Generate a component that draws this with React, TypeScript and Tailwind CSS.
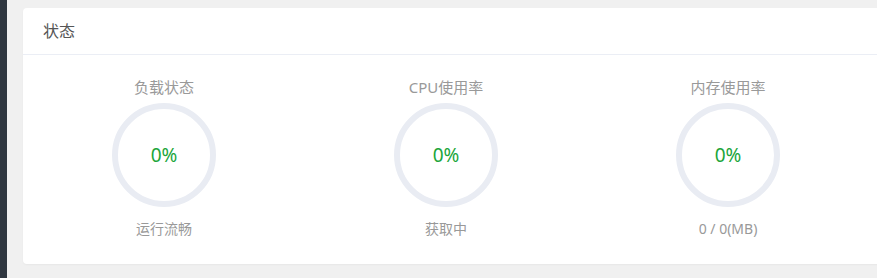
import React from "react";

const font = { fontFamily: '"Noto Sans", "Noto Sans CJK SC", sans-serif' };

const stats = [
  { title: "负载状态", value: 0, label: "运行流畅" },
  { title: "CPU使用率", value: 0, label: "获取中" },
  { title: "内存使用率", value: 0, label: "0 / 0(MB)" },
];

function Ring({ value }: { value: number }) {
  const r = 49;
  const c = 2 * Math.PI * r;
  return (
    <div className="relative w-[104px] h-[104px]">
      <svg width="104" height="104" viewBox="0 0 104 104" className="-rotate-90">
        <circle cx="52" cy="52" r={r} fill="none" stroke="#e9ecf3" strokeWidth="6" />
        {value > 0 && (
          <circle
            cx="52"
            cy="52"
            r={r}
            fill="none"
            stroke="#20a53a"
            strokeWidth="6"
            strokeLinecap="round"
            strokeDasharray={`${(c * value) / 100} ${c}`}
          />
        )}
      </svg>
      <div className="absolute inset-0 flex items-center justify-center text-[19px] text-[#20a53a]">{value}%</div>
    </div>
  );
}

export default function App() {
  return (
    <div className="flex h-[278px] overflow-hidden bg-[#f0f0f0]" style={font}>
      <div className="w-[7px] shrink-0 bg-[#2f3740]" />
      <div className="flex-1 min-w-0 pl-4 pt-2">
        <div className="w-[1128px] h-[256px] bg-white rounded shadow-[0_1px_2px_rgba(0,0,0,0.04)]">
          <div className="h-[47px] px-5 flex items-center border-b border-[#ebeef5] text-base text-[#555]">状态</div>
          <div className="flex">
            {stats.map((s) => (
              <div key={s.title} className="w-[282px] flex flex-col items-center pt-5">
                <div className="h-6 leading-6 text-[15px] text-[#999]">{s.title}</div>
                <div className="mt-1">
                  <Ring value={s.value} />
                </div>
                <div className="mt-3 h-5 leading-5 text-sm text-[#999]">{s.label}</div>
              </div>
            ))}
          </div>
        </div>
      </div>
    </div>
  );
}
